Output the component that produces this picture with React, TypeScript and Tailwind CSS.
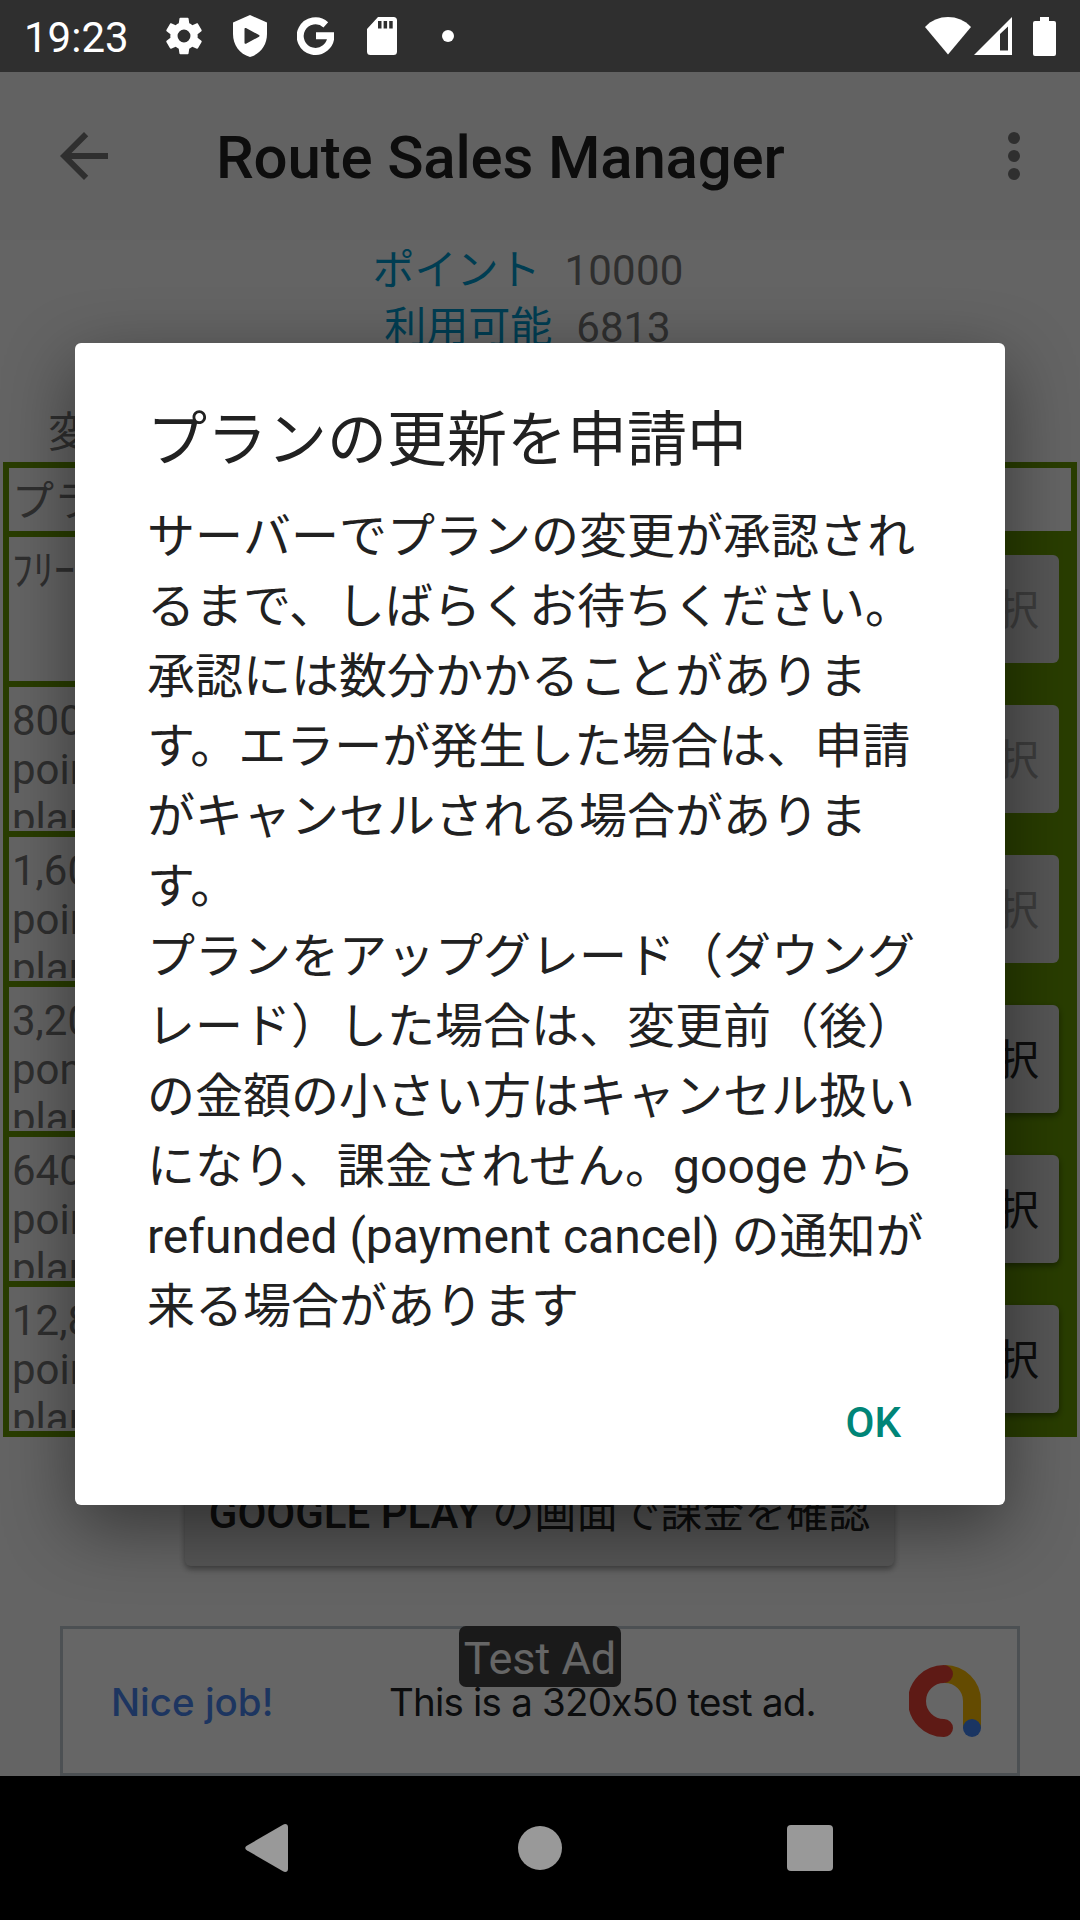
import React from 'react';

interface Plan {
  name: string;
  enabled: boolean;
}

const plans: Plan[] = [
  { name: 'ﾌﾘｰ', enabled: false },
  { name: '800 point plan', enabled: false },
  { name: '1,600 point plan', enabled: false },
  { name: '3,200 ponit plan', enabled: true },
  { name: '6400 point plan', enabled: true },
  { name: '12,800 point plan', enabled: true },
];

const messageLines = [
  'サーバーでプランの変更が承認され',
  'るまで、しばらくお待ちください。',
  '承認には数分かかることがありま',
  'す。エラーが発生した場合は、申請',
  'がキャンセルされる場合がありま',
  'す。',
  'プランをアップグレード（ダウング',
  'レード）した場合は、変更前（後）',
  'の金額の小さい方はキャンセル扱い',
  'になり、課金されせん。googe から',
  'refunded (payment cancel) の通知が',
  '来る場合があります',
];

function StatusBar() {
  return (
    <header className="flex h-[72px] shrink-0 items-center bg-[#2f2f2f] pl-[24px] pr-[24px] text-white">
      <span className="w-[141px] pt-[3px] text-[42px] leading-[69px]">19:23</span>
      {/* Settings */}
      <svg className="h-[38px] w-[38px]" viewBox="2.25 2 19.5 20" fill="currentColor">
        <path d="M19.14 12.94c.04-.3.06-.61.06-.94 0-.32-.02-.64-.07-.94l2.03-1.58c.18-.14.23-.41.12-.61l-1.92-3.32c-.12-.22-.37-.29-.59-.22l-2.39.96c-.5-.38-1.03-.7-1.62-.94l-.36-2.54c-.04-.24-.24-.41-.48-.41h-3.84c-.24 0-.43.17-.47.41l-.36 2.54c-.59.24-1.13.57-1.62.94l-2.39-.96c-.22-.08-.47 0-.59.22L2.74 8.87c-.12.21-.08.47.12.61l2.03 1.58c-.05.3-.09.63-.09.94s.02.64.07.94l-2.03 1.58c-.18.14-.23.41-.12.61l1.92 3.32c.12.22.37.29.59.22l2.39-.96c.5.38 1.03.7 1.62.94l.36 2.54c.05.24.24.41.48.41h3.84c.24 0 .44-.17.47-.41l.36-2.54c.59-.24 1.13-.56 1.62-.94l2.39.96c.22.08.47 0 .59-.22l1.92-3.32c.12-.22.07-.47-.12-.61l-2.01-1.58zM12 15.4a3.400 3.400 0 1 1 0-6.800 3.400 3.400 0 0 1 0 6.800z" />
      </svg>
      {/* Play Protect */}
      <svg className="ml-[30px] h-[42px] w-[34px]" viewBox="0 0 34 42" fill="currentColor">
        <path fillRule="evenodd" d="M17 0 34 7.500V19c0 11-6.500 20-17 23C6.500 39 0 30 0 19V7.500zM11.500 14c0-1 .8-1.300 1.500-1l13 7c.8.400.8 1.300 0 1.700l-13 7c-.7.400-1.500 0-1.500-1z" />
      </svg>
      {/* Google */}
      <svg className="ml-[30px] h-[38px] w-[37px]" viewBox="0 0 37 38" fill="none">
        <path d="M28.800 7.800A15.300 15.300 0 1 0 33.800 18.800H19" stroke="currentColor" strokeWidth="7" />
      </svg>
      {/* SD card */}
      <svg className="ml-[33px] h-[38px] w-[30px]" viewBox="0 0 30 38" fill="currentColor">
        <path fillRule="evenodd" d="M11 0h15.500a3.500 3.500 0 0 1 3.500 3.500v31a3.500 3.500 0 0 1-3.500 3.500h-23A3.500 3.500 0 0 1 0 34.500V12zM11 4v7.500h3.500V4zm5.600 0v7.500h3.500V4zm5.600 0v7.500h3.500V4z" />
      </svg>
      <span className="ml-[45px] h-[12px] w-[12px] rounded-full bg-white" />

      <div className="ml-auto flex items-center">
        <svg className="h-[38px] w-[46px]" viewBox="0 0 46 38" fill="currentColor">
          <path d="M23 37.500 0 10C12-3.300 34-3.300 46 10z" />
        </svg>
        <svg className="ml-[3px] h-[38px] w-[38px]" viewBox="0 0 38 38" fill="currentColor">
          <path fillRule="evenodd" d="M38 0v38H0zM34 9.500l-8 7.500v16.500h8z" />
        </svg>
        <svg className="ml-[21px] h-[39px] w-[23px]" viewBox="0 0 23 39" fill="currentColor">
          <path d="M7 0h9v4h5a2 2 0 0 1 2 2v31a2 2 0 0 1-2 2H2a2 2 0 0 1-2-2V6a2 2 0 0 1 2-2h5z" />
        </svg>
      </div>
    </header>
  );
}

function AppBar() {
  return (
    <div className="flex h-[168px] shrink-0 items-center bg-[#f5f5f5] pl-[48px] pr-[30px] text-[#757575]">
      <svg className="h-[72px] w-[72px]" viewBox="0 0 24 24" fill="currentColor">
        <path d="M20 11H7.830l5.590-5.590L12 4l-8 8 8 8 1.410-1.410L7.830 13H20v-2z" />
      </svg>
      <h1 className="ml-[96px] pt-[4px] text-[60px] font-medium leading-[72px] tracking-[-0.18px] text-[#212121]">
        Route Sales Manager
      </h1>
      <svg className="ml-auto h-[72px] w-[72px]" viewBox="0 0 24 24" fill="currentColor">
        <circle cx="12" cy="6" r="2" />
        <circle cx="12" cy="12" r="2" />
        <circle cx="12" cy="18" r="2" />
      </svg>
    </div>
  );
}

function PlanTable() {
  return (
    <div className="mx-[3px] flex flex-col gap-[6px] bg-[#669900] p-[6px]">
      <div className="flex h-[63px] items-center bg-[#fafafa] pl-[3px] pt-[3px]">プラン</div>
      {plans.map((plan) => (
        <div key={plan.name} className="flex h-[144px] justify-between">
          <div className="w-[160px] bg-[#fafafa] p-[3px]">
            <div className="h-[138px] w-[120px] overflow-hidden pt-[6px] leading-[49px]">{plan.name}</div>
          </div>
          <button
            disabled={!plan.enabled}
            className="mr-[12px] mt-[18px] h-[108px] w-[124px] rounded-[6px] bg-[#d6d7d7] pt-[2px] text-[#212121] enabled:shadow-[0_3px_6px_rgba(0,0,0,0.4)] disabled:text-[#999999]"
          >
            選択
          </button>
        </div>
      ))}
    </div>
  );
}

function AdBanner() {
  return (
    <div className="relative mx-[60px] mt-[60px] flex h-[150px] items-center border-[3px] border-[#bfc8d0] bg-white pl-[48px] pr-[36px] font-['Inter',sans-serif]">
      <span className="w-[278px] pt-[3px] text-[38.5px] font-medium text-[#4a86f0]">Nice job!</span>
      <span className="whitespace-nowrap pt-[3px] text-[38.5px] tracking-[-0.8px] text-[#202124]">
        This is a 320x50 test ad.
      </span>
      <svg className="ml-auto h-[72px] w-[72px]" viewBox="0 0 72 72" fill="none" strokeWidth="18">
        <path d="M36 9a27 27 0 0 1 27 27v27" stroke="#fbbc04" />
        <path d="M35 9a27 27 0 0 0 0 54" stroke="#ea4335" strokeLinecap="round" />
        <circle cx="63" cy="63" r="9" fill="#4285f4" />
      </svg>
      <span className="absolute left-[396px] top-[-3px] h-[61px] w-[162px] rounded-[7px] bg-[#424242] text-center font-['Roboto',sans-serif] text-[45px] leading-[65px] text-white">
        Test Ad
      </span>
    </div>
  );
}

function PlanDialog() {
  return (
    <div
      role="dialog"
      className="absolute left-[75px] top-[343px] flex h-[1162px] w-[930px] flex-col rounded-[6px] bg-white px-[72px] text-[#212121] shadow-[0_22px_70px_rgba(0,0,0,0.45)]"
    >
      <h2 className="mt-[54px] text-[60px] leading-[88px]">プランの更新を申請中</h2>
      <div className="mt-[17px] text-[48px] leading-[70px]">
        {messageLines.map((line) => (
          <p key={line} className="whitespace-nowrap first:[font-kerning:none]">{line}</p>
        ))}
      </div>
      <button className="mr-[32px] mt-[53px] self-end text-[42px] font-medium leading-[56px] text-[#008577]">OK</button>
    </div>
  );
}

function NavBar() {
  return (
    <nav className="flex h-[144px] shrink-0 items-center bg-black pl-[245px] text-[#999999]">
      <svg className="h-[48px] w-[43px]" viewBox="0 0 43 48" fill="currentColor">
        <path d="M38 .700C40.500-.700 43 .300 43 3v42c0 2.700-2.500 3.700-5 2.300L1.800 26.200c-2-1.200-2-3.200 0-4.400z" />
      </svg>
      <span className="ml-[230px] h-[44px] w-[44px] rounded-full bg-[#999999]" />
      <span className="ml-[225px] h-[46px] w-[46px] rounded-[4px] bg-[#999999]" />
    </nav>
  );
}

export default function App() {
  return (
    <div className="relative flex h-[1920px] w-[1080px] flex-col overflow-hidden font-['Roboto','Noto_Sans_CJK_JP',sans-serif]">
      <StatusBar />
      <div className="relative flex h-[1704px] shrink-0 flex-col overflow-hidden bg-[#fafafa] text-[42px] text-[#757575]">
        <AppBar />
        <div className="mt-[2px] flex flex-col leading-[57px]">
          <div className="flex justify-center gap-[24px] pr-[24px]">
            <span className="text-[#0099cc]">ポイント</span>
            <span className="tracking-[0.2px]">10000</span>
          </div>
          <div className="flex justify-center gap-[24px] pr-[25px]">
            <span className="text-[#0099cc]">利用可能</span>
            <span>6813</span>
          </div>
        </div>
        <p className="mb-[1px] ml-[48px] mt-[48px] leading-[57px]">変更</p>
        <PlanTable />
        <button className="ml-[185px] mt-[21px] h-[108px] w-[709px] whitespace-nowrap rounded-[6px] bg-[#d6d7d7] pt-[2px] font-medium text-[#212121] shadow-[0_3px_6px_rgba(0,0,0,0.4)]">
          GOOGLE PLAY <span className="font-normal">の画面で課金を確認</span>
        </button>
        <AdBanner />
        {/* Scrim behind the dialog */}
        <div className="absolute inset-0 bg-black/60" />
      </div>
      <NavBar />
      <PlanDialog />
    </div>
  );
}
